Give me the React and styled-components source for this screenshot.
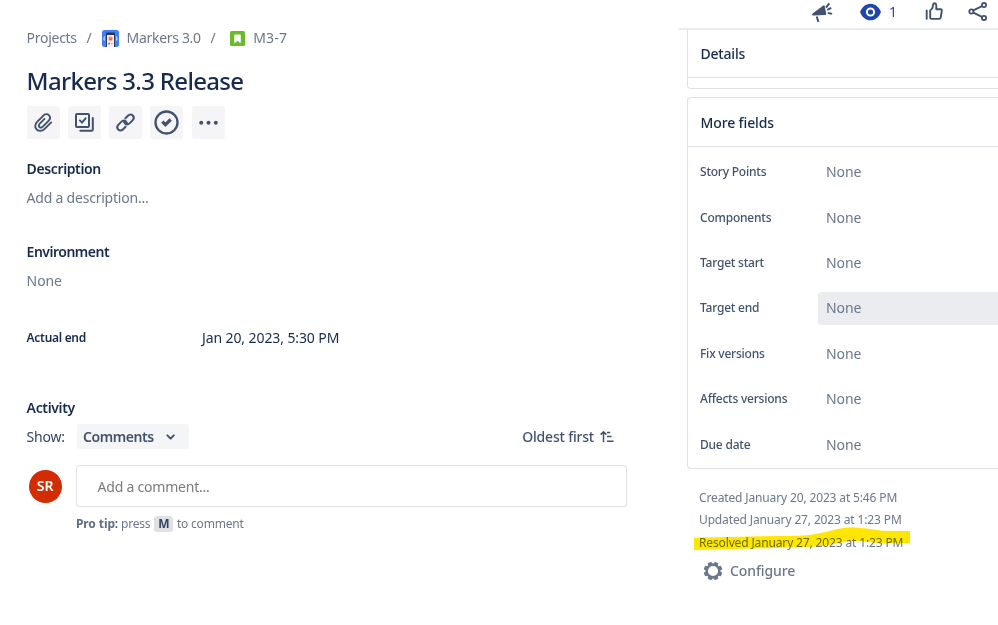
import styled, { createGlobalStyle } from "styled-components";

const GlobalStyle = createGlobalStyle`
  * {
    box-sizing: border-box;
  }
  body {
    margin: 0;
    background-color: #fff;
    font-family: "Noto Sans", "Open Sans", sans-serif;
    color: #172b4d;
    overflow: hidden;
  }
  svg {
    display: block;
    flex: none;
  }
`;

const Page = styled.div`
  display: grid;
  grid-template-columns: 679px 1fr;
  height: 625px;
  overflow: hidden;
`;

const Text = styled.span`
  font-size: ${(p) => p.$size || 14}px;
  font-weight: ${(p) => p.$weight || 400};
  letter-spacing: ${(p) => p.$track || 0}px;
  color: ${(p) => p.$color || "#172b4d"};
  line-height: 20px;
  white-space: nowrap;
`;

const Main = styled.main`
  display: flex;
  flex-direction: column;
  padding: 28px 52px 0 26.6px;
`;

const Breadcrumbs = styled.nav`
  display: flex;
  align-items: center;
  height: 20px;
  color: #6b778c;

  .crumb-slash {
    margin: 0 9.8px;
  }
  .crumb-slash-wide {
    margin-right: 14.5px;
  }
  svg {
    margin-right: 8px;
  }
`;

const Title = styled.h1`
  margin: 16px 0 0;
  font-size: 24px;
  font-weight: 500;
  letter-spacing: -0.68px;
  line-height: 34px;
  white-space: nowrap;
`;

const Toolbar = styled.div`
  display: flex;
  gap: 8.3px;
  margin-top: 8px;
`;

const ToolButton = styled.button`
  display: flex;
  align-items: center;
  justify-content: center;
  width: 33px;
  height: 33px;
  padding: 0;
  border: 0;
  border-radius: 3px;
  background-color: #f5f5f7;
  color: #42526e;
`;

const Section = styled.section`
  display: flex;
  flex-direction: column;
  gap: 9px;
  margin-top: ${(p) => p.$top}px;
`;

const DateRow = styled.div`
  display: grid;
  grid-template-columns: 175.4px 1fr;
  align-items: center;
  margin-top: 37px;
`;

const ActivityBar = styled.div`
  display: flex;
  align-items: center;
  height: 25px;
  margin-top: 6px;
`;

const Select = styled.button`
  display: flex;
  align-items: center;
  justify-content: space-between;
  width: 112px;
  height: 25px;
  margin-left: 12px;
  padding: 0 12px 0 6px;
  border: 0;
  border-radius: 3px;
  background-color: #f4f5f7;
  font-family: inherit;
  color: #42526e;
`;

const SortButton = styled.div`
  display: flex;
  align-items: center;
  gap: 6px;
  margin-left: auto;
  padding-right: 13px;
  color: #42526e;
`;

const CommentRow = styled.div`
  display: flex;
  align-items: center;
  gap: 14px;
  margin: 16px 0 0 2px;
`;

const Avatar = styled.div`
  display: flex;
  align-items: center;
  justify-content: center;
  width: 33px;
  height: 33px;
  border-radius: 50%;
  background-color: #d22c00;
`;

const CommentBox = styled.div`
  display: flex;
  align-items: center;
  flex: 1;
  height: 42px;
  padding: 2px 21px 0;
  border: 1px solid #dfe1e6;
  border-radius: 3px;
`;

const ProTip = styled.div`
  display: flex;
  align-items: center;
  margin: 7px 0 0 49.4px;
  height: 20px;
`;

const Key = styled.kbd`
  display: flex;
  align-items: center;
  justify-content: center;
  width: 19px;
  height: 16px;
  margin: 0 3.5px 0 4px;
  border-radius: 3px;
  background-color: #dfe1e6;
  font-family: inherit;
`;

const Side = styled.aside`
  display: flex;
  flex-direction: column;
  min-width: 0;
`;

const ActionBar = styled.header`
  display: flex;
  align-items: center;
  height: 30px;
  padding: 0 11px 5px 132px;
  border-bottom: 2px solid #ebecf0;
  color: #42526e;
`;

const Watchers = styled.div`
  display: flex;
  align-items: center;
  gap: 8px;
  margin: 0 28px 0 27px;
`;

const Reactions = styled.div`
  display: flex;
  align-items: center;
  gap: 25px;
`;

const Panel = styled.section`
  margin: ${(p) => p.$top || 0}px 0 0 8px;
  height: ${(p) => p.$height}px;
  border: 1px solid #dfe1e6;
  border-right: 0;
  border-top-width: ${(p) => (p.$cut ? 0 : 1)}px;
  border-radius: ${(p) => (p.$cut ? "0 0 0 4px" : "4px 0 0 4px")};
`;

const PanelHeader = styled.div`
  display: flex;
  align-items: center;
  height: ${(p) => p.$height}px;
  padding: 1px 0 0 12.5px;
  border-bottom: 1px solid #dfe1e6;
`;

const Fields = styled.div`
  display: flex;
  flex-direction: column;
  padding-top: 2.6px;
`;

const Field = styled.div`
  display: grid;
  grid-template-columns: 118px 1fr;
  align-items: center;
  height: 45.4px;
  padding-left: 12px;
`;

const FieldValue = styled.div`
  display: flex;
  align-items: center;
  height: 33px;
  padding-left: 8px;
  border-radius: 3px 0 0 3px;
  background-color: ${(p) => (p.$active ? "#ebecf0" : "transparent")};
`;

const Dates = styled.div`
  position: relative;
  display: flex;
  flex-direction: column;
  gap: 2.7px;
  padding: 18.6px 0 0 20px;
`;

const Marker = styled.svg`
  position: absolute;
  left: 15px;
  top: 58px;
  mix-blend-mode: multiply;
`;

const Configure = styled.div`
  display: flex;
  align-items: center;
  gap: 7px;
  margin: 8px 0 0 24px;
  color: #6b778c;
`;

const fields = [
  { name: "Story Points" },
  { name: "Components" },
  { name: "Target start" },
  { name: "Target end", active: true },
  { name: "Fix versions" },
  { name: "Affects versions" },
  { name: "Due date" },
];

const dates = [
  "Created January 20, 2023 at 5:46 PM",
  "Updated January 27, 2023 at 1:23 PM",
  "Resolved January 27, 2023 at 1:23 PM",
];

const ProjectIcon = () => (
  <svg width="17" height="17" viewBox="0 0 17 17">
    <rect width="17" height="17" rx="2.5" fill="#3f80f7" />
    <path d="M2.6 6.5q-1.2 2 0 4M14.4 6.5q1.2 2 0 4" stroke="#bcd5ff" strokeWidth="1.2" fill="none" />
    <path d="M4 17V3.5q0-1 1-1h7q1 0 1 1V17z" fill="#253858" />
    <path d="M5 5h7v12H5z" fill="#f8efee" />
    <circle cx="8.5" cy="8.6" r="2.4" fill="#f79a8e" />
    <path d="M7.2 8.2h.9M9 8.2h.9M7.4 9.6h2.2" stroke="#de350b" strokeWidth=".7" />
    <circle cx="7" cy="13.7" r=".9" fill="#de350b" />
    <path d="M9.3 13.7h1.3" stroke="#4c9aff" strokeWidth="1" />
  </svg>
);

const StoryIcon = () => (
  <svg width="15" height="15" viewBox="0 0 15 15">
    <rect width="15" height="15" rx="1.5" fill="#6aba2c" />
    <path d="M4.9 4.2h5.2v7L7.5 8.8l-2.6 2.4z" fill="#fff" stroke="#fff" strokeWidth="1.3" strokeLinejoin="round" />
  </svg>
);

const stroke = {
  fill: "none",
  stroke: "currentColor",
  strokeWidth: 2,
  strokeLinecap: "round",
  strokeLinejoin: "round",
};

const AttachIcon = () => (
  <svg width="25" height="25" viewBox="0.6 0 25 25">
    <path
      {...stroke}
      strokeWidth="1.9"
      d="M20.8 12.4l-6.3 6.3c-2.500 2.500-6 2.800-8.200.8-2.200-2.100-1.900-5.300.6-7.800l5.900-5.900c1.800-1.800 4.300-2 5.800-.5s1.300 3.800-.5 5.600l-5.700 5.700c-1.100 1.100-2.500 1.300-3.400.4-.9-.9-.8-2.200.4-3.400l4.700-4.700"
    />
  </svg>
);

const SubtaskIcon = () => (
  <svg width="25" height="25" viewBox="0 0 25 25">
    <rect {...stroke} x="4" y="4" width="13" height="13" rx="1" />
    <path {...stroke} d="M7.900 10.4l2.100 2.200 3.600-4.300" />
    <path {...stroke} d="M20.800 8v11.800q0 1-1 1H8.300" />
  </svg>
);

const LinkIcon = () => (
  <svg width="25" height="25" viewBox="0 0 25 25">
    <path
      {...stroke}
      strokeWidth="2"
      d="M12.600 16.700l-2.500 2.500c-1.500 1.500-3.500 1.600-4.900.3-1.300-1.400-1.200-3.400.3-4.900l2.700-2.700c1.500-1.500 3.500-1.600 4.900-.3.700.7 1 1.500.9 2.400M12.400 8.300l2.500-2.500c1.500-1.500 3.500-1.600 4.900-.3 1.300 1.400 1.200 3.400-.3 4.900l-2.700 2.700c-1.500 1.500-3.500 1.600-4.900.3-.7-.7-1-1.500-.9-2.400"
    />
  </svg>
);

const CheckIcon = () => (
  <svg width="25" height="25" viewBox="0 0 25 25">
    <circle {...stroke} cx="12.5" cy="12.5" r="11" strokeWidth="2.300" />
    <path {...stroke} strokeWidth="3.200" strokeLinecap="butt" strokeLinejoin="miter" d="M8.300 11.700l3.100 3 5.300-5.200" />
  </svg>
);

const MoreIcon = () => (
  <svg width="25" height="25" viewBox="0 0 25 25" fill="currentColor">
    <circle cx="5.200" cy="12.8" r="2" />
    <circle cx="12.500" cy="12.8" r="2" />
    <circle cx="19.800" cy="12.8" r="2" />
  </svg>
);

const ChevronIcon = () => (
  <svg width="12" height="12" viewBox="0 0 12 12">
    <path {...stroke} d="M2.400 4.400L5.600 7.600l3.200-3.200" />
  </svg>
);

const SortIcon = () => (
  <svg width="14" height="14" viewBox="0 0 14 14">
    <path {...stroke} strokeWidth="1.500" strokeLinecap="butt" d="M3.500 12.200V2.200M.6 4.600L3.500 1.900l2.900 2.700M7 2.400h3.200M7 6.600h4.600M7 11.300h6.600" />
  </svg>
);

const FeedbackIcon = () => (
  <svg width="22" height="22" viewBox="0 0 22 22">
    <path d="M1.600 12.600L12.300 4.600q1.100-.7 1.400.6l1.500 7.600q.2 1.300-1.100 1.300L2.500 14.600q-2.300 0-.9-2z" fill="currentColor" />
    <path {...stroke} strokeWidth="2" strokeLinecap="butt" d="M5.700 15.500l1.700 5.400M15 6.600l3.300-4.300M16.300 8.900l3.900-2M16.800 11.900l4.300 1" />
  </svg>
);

const WatchIcon = () => (
  <svg width="21" height="18" viewBox="0 0 21 18">
    <path d="M10.5.7C15.5.7 19 4.400 20.600 8q.4 1 0 2c-1.600 3.600-5.100 7.300-10.100 7.300S2 13.600.4 10q-.4-1 0-2C2 4.400 5.500.7 10.500.7z" fill="#1f46ab" />
    <circle cx="10.500" cy="9" r="3.600" fill="#1f46ab" stroke="#fff" strokeWidth="2" />
  </svg>
);

const LikeIcon = () => (
  <svg width="18" height="19" viewBox="0 0 18 19">
    <path {...stroke} strokeWidth="1.900" d="M1.700 8.500v8.300M5.200 8.500q2.300-1.300 2.600-3.800l.3-2.100q.3-1.400 1.600-1.300 1.600.3 1.600 2.300v3.600h4.200q1.500.2 1.300 1.600l-1.100 6.700q-.3 1.400-1.700 1.400H6.400q-1.200 0-1.200-1.200z" />
  </svg>
);

const ShareIcon = () => (
  <svg width="20" height="19" viewBox="0 0 20 19">
    <path {...stroke} strokeWidth="1.800" d="M5.300 8.400l8.700-4.300M5.300 10.600l8.700 4.300" />
    <circle {...stroke} strokeWidth="1.800" cx="3.400" cy="9.500" r="2.100" />
    <circle {...stroke} strokeWidth="1.800" cx="16" cy="3.100" r="2.100" />
    <circle {...stroke} strokeWidth="1.800" cx="16" cy="15.900" r="2.100" />
  </svg>
);

const GearIcon = () => (
  <svg width="20" height="20" viewBox="0 0 20 20">
    <circle cx="10" cy="10" r="6.300" fill="none" stroke="currentColor" strokeWidth="2.400" />
    {[22.5, 67.5, 112.5, 157.5, 202.5, 247.5, 292.5, 337.5].map((a) => (
      <path key={a} d="M7.600 3.800L8.100.7h3.800l.5 3.100z" fill="currentColor" transform={`rotate(${a} 10 10)`} />
    ))}
  </svg>
);

const App = () => {
  return (
    <Page>
      <GlobalStyle />
      <Main>
        <Breadcrumbs>
          <Text $color="#6b778c" $track={-0.28}>Projects</Text>
          <Text $color="#6b778c" className="crumb-slash">/</Text>
          <ProjectIcon />
          <Text $color="#6b778c" $track={-0.32}>Markers 3.0</Text>
          <Text $color="#6b778c" className="crumb-slash crumb-slash-wide">/</Text>
          <StoryIcon />
          <Text $color="#6b778c" $track={0.2}>M3-7</Text>
        </Breadcrumbs>
        <Title>Markers 3.3 Release</Title>
        <Toolbar>
          <ToolButton><AttachIcon /></ToolButton>
          <ToolButton><SubtaskIcon /></ToolButton>
          <ToolButton><LinkIcon /></ToolButton>
          <ToolButton><CheckIcon /></ToolButton>
          <ToolButton><MoreIcon /></ToolButton>
        </Toolbar>
        <Section $top={20}>
          <Text $weight={600} $track={-0.38}>Description</Text>
          <Text $color="#6b778c" $track={-0.22}>Add a description...</Text>
        </Section>
        <Section $top={34}>
          <Text $weight={600} $track={-0.5}>Environment</Text>
          <Text $color="#6b778c" $track={-0.1}>None</Text>
        </Section>
        <DateRow>
          <Text $size={12} $weight={600} $track={-0.3}>Actual end</Text>
          <Text $track={-0.1}>Jan 20, 2023, 5:30 PM</Text>
        </DateRow>
        <Section $top={50}>
          <Text $weight={600} $track={-0.35}>Activity</Text>
        </Section>
        <ActivityBar>
          <Text $color="#344563" $track={-0.2}>Show:</Text>
          <Select>
            <Text $color="#42526e" $weight={600} $track={-0.4}>Comments</Text>
            <ChevronIcon />
          </Select>
          <SortButton>
            <Text $color="#42526e" $weight={500} $track={-0.2}>Oldest first</Text>
            <SortIcon />
          </SortButton>
        </ActivityBar>
        <CommentRow>
          <Avatar><Text $color="#fff" $weight={600}>SR</Text></Avatar>
          <CommentBox><Text $color="#7a7a7a" $track={-0.22}>Add a comment...</Text></CommentBox>
        </CommentRow>
        <ProTip>
          <Text $size={12} $weight={700} $color="#5e6c84" $track={-0.1}>Pro tip:</Text>
          <Text $size={12} $color="#6b778c" $track={-0.2}>&nbsp;press</Text>
          <Key><Text $size={12} $weight={700} $color="#344563">M</Text></Key>
          <Text $size={12} $color="#6b778c" $track={-0.2}>to comment</Text>
        </ProTip>
      </Main>
      <Side>
        <ActionBar>
          <FeedbackIcon />
          <Watchers>
            <WatchIcon />
            <Text $color="#1f46ab" $size={14}>1</Text>
          </Watchers>
          <Reactions>
            <LikeIcon />
            <ShareIcon />
          </Reactions>
        </ActionBar>
        <Panel $cut $height={59}>
          <PanelHeader $height={48}>
            <Text $weight={500} $track={-0.2}>Details</Text>
          </PanelHeader>
        </Panel>
        <Panel $top={8} $height={372}>
          <PanelHeader $height={49}>
            <Text $weight={500} $track={-0.12}>More fields</Text>
          </PanelHeader>
          <Fields>
            {fields.map((f) => (
              <Field key={f.name}>
                <Text $size={12} $weight={500} $track={-0.22} $color="#42526e">{f.name}</Text>
                <FieldValue $active={f.active}>
                  <Text $color="#6b778c" $track={-0.1}>None</Text>
                </FieldValue>
              </Field>
            ))}
          </Fields>
        </Panel>
        <Dates>
          {dates.map((d) => (
            <Text key={d} $size={12} $color="#6b778c" $track={-0.14}>{d}</Text>
          ))}
          <Marker width="217" height="24" viewBox="0 0 217 24">
            <path
              d="M0 10.700L84 9q20 0 32-1l18-3.600Q150 .2 158 .3q14 .7 30 3.400l28 .3v12.300h-25q-13-.3-23-2.200-12-.5-24 2.200-16 3.600-33 4L0 23z"
              fill="#ffe600"
            />
          </Marker>
        </Dates>
        <Configure>
          <GearIcon />
          <Text $weight={500} $color="#6b778c" $track={-0.1}>Configure</Text>
        </Configure>
      </Side>
    </Page>
  );
};

export default App;
